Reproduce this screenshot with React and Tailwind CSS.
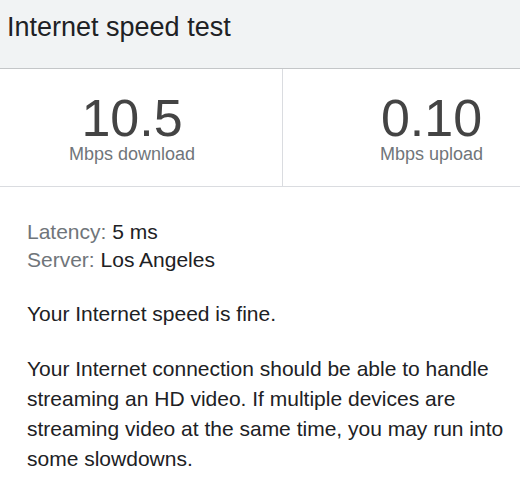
export default function App() {
  const stats = [
    { value: "10.5", label: "Mbps download", pad: "pr-[18px]" },
    { value: "0.10", label: "Mbps upload", pad: "pl-[60px] border-l border-[#dadce0]" },
  ];

  return (
    <div
      className="w-[520px] h-[495px] bg-white overflow-hidden"
      style={{ fontFamily: '"Liberation Sans", Arial, sans-serif' }}
    >
      <div className="bg-[#f1f3f4] border-b border-[#c4c6c8] pt-[11px] pb-[25px] px-[7px]">
        <h1 className="text-[27px] leading-[32px] text-[#202124] font-normal">Internet speed test</h1>
      </div>

      <div className="grid grid-cols-[282px_1fr] border-b border-[#dadce0]">
        {stats.map((s) => (
          <div key={s.label} className={`pt-[22px] pb-[23px] text-center ${s.pad}`}>
            <div className="text-[52px] leading-[54px] text-[#444]">{s.value}</div>
            <div className="text-[18px] leading-[18px] text-[#70757a]">{s.label}</div>
          </div>
        ))}
      </div>

      <div className="pl-[27px] pr-[2px] pt-[31px] text-[21px] text-[#202124]">
        <div className="leading-[28px]">
          <div>
            <span className="text-[#70757a]">Latency:</span> 5 ms
          </div>
          <div>
            <span className="text-[#70757a]">Server:</span> Los Angeles
          </div>
        </div>
        <p className="mt-[25px] leading-[30px]">Your Internet speed is fine.</p>
        <p className="mt-[25px] leading-[30px]">
          Your Internet connection should be able to handle streaming an HD video. If multiple devices are
          streaming video at the same time, you may run into some slowdowns.
        </p>
      </div>
    </div>
  );
}
